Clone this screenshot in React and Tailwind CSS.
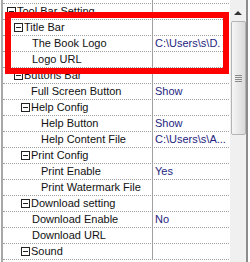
import React from "react";

const rows = [
  { label: "Tool Bar Setting", cat: true, pad: 7 },
  { label: "Title Bar", cat: true, pad: 14 },
  { label: "The Book Logo", pad: 32, value: "C:\\Users\\s\\D." },
  { label: "Logo URL", pad: 32 },
  { label: "Buttons Bar", cat: true, pad: 14 },
  { label: "Full Screen Button", pad: 31, value: "Show" },
  { label: "Help Config", cat: true, pad: 21 },
  { label: "Help Button", pad: 41, value: "Show" },
  { label: "Help Content File", pad: 41, value: "C:\\Users\\s\\A..." },
  { label: "Print Config", cat: true, pad: 21 },
  { label: "Print Enable", pad: 41, value: "Yes" },
  { label: "Print Watermark File", pad: 41 },
  { label: "Download setting", cat: true, pad: 21 },
  { label: "Download Enable", pad: 32, value: "No" },
  { label: "Download URL", pad: 32 },
  { label: "Sound", cat: true, pad: 21 },
];

// the little collapse box in front of a category
const Minus = () => (
  <span className="relative w-[9px] h-[9px] border border-[#222] bg-white shrink-0 mr-[1px]">
    <span className="absolute left-[1px] right-[1px] top-[3px] h-[1px] bg-[#222]" />
  </span>
);

const Row = ({ row }) => (
  <div className="flex h-[16px] border-b border-dotted border-[#a0a0a0]">
    <div
      className="w-[150px] border-r border-[#a0a0a0] flex items-center overflow-hidden whitespace-nowrap text-[#111]"
      style={{ paddingLeft: row.pad - 3 }}
    >
      {row.cat && <Minus />}
      <span>{row.label}</span>
    </div>
    <div className="flex-1 flex items-center pl-[2px] overflow-hidden whitespace-nowrap text-[#1e1e80]">
      {row.value}
    </div>
  </div>
);

const Scrollbar = () => (
  <div className="w-[17px] h-full bg-[#f0f0f0] border-l border-white flex flex-col items-center">
    <div className="h-[20px] w-full flex items-center justify-center pt-[5px]">
      <span className="w-0 h-0 border-l-[4px] border-r-[4px] border-b-[4px] border-l-transparent border-r-transparent border-b-[#333]" />
    </div>
    <div className="mt-[1px] w-[15px] h-[114px] rounded-[2px] border border-[#b4b4b4] bg-gradient-to-r from-[#f6f6f6] to-[#dadada] flex flex-col items-center justify-center gap-[1px]">
      <span className="w-[7px] h-[1px] bg-[#8a8a8a]" />
      <span className="w-[7px] h-[1px] bg-[#8a8a8a]" />
      <span className="w-[7px] h-[1px] bg-[#8a8a8a]" />
      <span className="w-[7px] h-[1px] bg-[#8a8a8a]" />
    </div>
  </div>
);

export default function App() {
  return (
    <div
      className="relative w-[250px] h-[262px] bg-white pl-[1px] flex overflow-hidden text-[11px] leading-none"
      style={{ fontFamily: '"Liberation Sans", Arial, sans-serif' }}
    >
      <div className="w-[228px] h-full border-l-2 border-[#a8a8a8] flex flex-col">
        <div className="h-[4px] shrink-0 flex border-b border-dotted border-[#a0a0a0]">
          <div className="w-[150px] border-r border-[#a0a0a0]" />
        </div>
        {rows.map((r) => (
          <Row key={r.label} row={r} />
        ))}
      </div>
      <Scrollbar />
      <div className="w-[2px] h-full bg-[#8c8c8c]" />

      {/* red highlight frame */}
      <div className="absolute left-[5px] top-[12px] w-[224px] h-[62px] border-[6px] border-[#ff0000]" />
    </div>
  );
}
